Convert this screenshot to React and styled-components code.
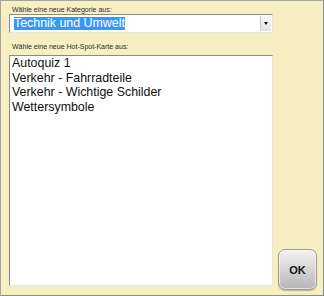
import React from "react";
import styled, { createGlobalStyle } from "styled-components";

const GlobalStyle = createGlobalStyle`
  html, body { margin: 0; padding: 0; }
  body { font-family: "Liberation Sans", Arial, sans-serif; }
`;

const Dialog = styled.div`
  box-sizing: border-box;
  width: 324px;
  height: 296px;
  background: #f7efc1;
  border: 1px solid #a4a4a4;
  border-right-color: #8c8c8c;
  border-bottom-color: #8c8c8c;
  display: flex;
  padding: 3px 0 5px 8px;
`;

const Column = styled.div`
  width: 264px;
  display: flex;
  flex-direction: column;
`;

const Label = styled.div`
  font-size: 7px;
  line-height: 9px;
  color: #2b2b2b;
  margin-left: 3px;
  margin-top: ${(p) => p.$top || 0}px;
  margin-bottom: ${(p) => p.$bottom || 0}px;
`;

const Select = styled.div`
  box-sizing: border-box;
  height: 19px;
  background: #fff;
  border: 1px solid #e6e6e6;
  border-top-color: #8a8a8a;
  border-left-color: #8a8a8a;
  display: flex;
  align-items: center;
  padding-left: 4px;
`;

const SelectText = styled.div`
  flex: 1;
  font-size: 12.4px;
  line-height: 13px;
`;

const Highlight = styled.span`
  display: inline-block;
  height: 13px;
  background: #3399ff;
  color: #fff;
`;

const Arrow = styled.div`
  width: 10px;
  height: 15px;
  margin-right: 1px;
  background: linear-gradient(#f6f6f6, #e2e2e2);
  border-left: 1px solid #c8c8c8;
  display: flex;
  align-items: center;
  justify-content: center;
  &::after {
    content: "";
    border-left: 2.5px solid transparent;
    border-right: 2.5px solid transparent;
    border-top: 3px solid #111;
  }
`;

const List = styled.div`
  box-sizing: border-box;
  flex: 1;
  background: #fff;
  border: 1px solid #e6e6e6;
  border-top-color: #8a8a8a;
  border-left-color: #8a8a8a;
  margin-bottom: 4px;
  padding: 0 2px;
`;

const Item = styled.div`
  font-size: 12.4px;
  line-height: 14.6px;
  color: #111;
`;

const OkButton = styled.div`
  box-sizing: border-box;
  align-self: flex-end;
  margin-left: 5px;
  width: 39px;
  height: 41px;
  border-radius: 7px;
  border: 1px solid #9a9a9a;
  background: linear-gradient(#f2f2f2, #d2d2d2 55%, #b4b4b4);
  box-shadow: inset 0 0 0 1px rgba(255, 255, 255, 0.6), 0 1px 1px rgba(0, 0, 0, 0.25);
  display: flex;
  align-items: center;
  justify-content: center;
  font-size: 11px;
  font-weight: bold;
  color: #151515;
`;

const items = ["Autoquiz 1", "Verkehr - Fahrradteile", "Verkehr - Wichtige Schilder", "Wettersymbole"];

export default function App() {
  return (
    <>
      <GlobalStyle />
      <Dialog>
        <Column>
          <Label $top={1}>Wähle eine neue Kategorie aus:</Label>
          <Select>
            <SelectText>
              <Highlight>Technik und Umwelt</Highlight>
            </SelectText>
            <Arrow />
          </Select>
          <Label $top={9} $bottom={4}>Wähle eine neue Hot-Spot-Karte aus:</Label>
          <List>
            {items.map((item) => (
              <Item key={item}>{item}</Item>
            ))}
          </List>
        </Column>
        <OkButton>OK</OkButton>
      </Dialog>
    </>
  );
}
